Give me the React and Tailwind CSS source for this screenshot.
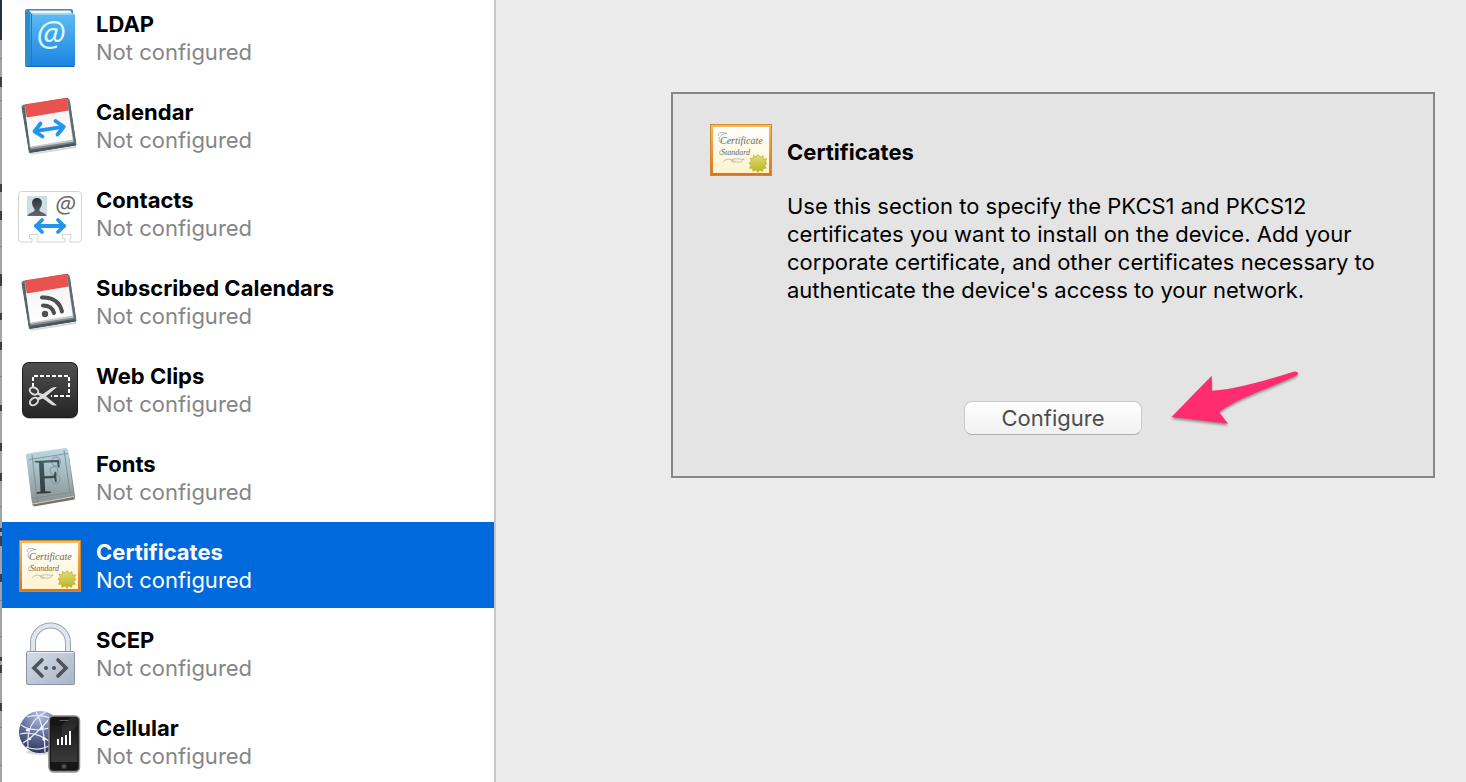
import React, { useState } from "react";

function LdapIcon() {
  return (
    <svg viewBox="0 0 64 64" className="w-16 h-16 shrink-0" aria-hidden="true">
      <defs>
        <linearGradient id="book" x1="0" y1="0" x2="0" y2="1">
          <stop offset="0" stopColor="#62bdf3" />
          <stop offset="1" stopColor="#1a83e0" />
        </linearGradient>
      </defs>
      <path d="M7 6Q7 4 9 4H53Q55 4 55 6V12H7Z" fill="#3d8cb4" />
      <path d="M11 5.500H52.500L54 9H14Z" fill="#f4f4f4" />
      <path d="M7 6L12 8.500H55Q57 8.500 57 10.500V60Q57 62 55 62H9Q7 62 7 60Z" fill="url(#book)" />
      <path d="M7 6L12 8.500V61.500H9Q7 61.500 7 60Z" fill="#2d8dcb" />
      <path d="M13.500 9V61.500" stroke="#2277bd" strokeWidth="1" />
      <path d="M15 9.500H56" stroke="#8ad2fa" strokeWidth="1" />
      <path d="M8 61.500H56" stroke="#1269b8" strokeWidth="1" />
      <text x="33" y="41" textAnchor="middle" fontFamily="Open Sans, sans-serif" fontSize="34" fontStyle="italic" fill="#d9fbff">@</text>
    </svg>
  );
}

function CalendarBase({ children }) {
  return (
    <svg viewBox="0 0 64 64" className="w-16 h-16 shrink-0" aria-hidden="true">
      <defs>
        <linearGradient id="page" x1="0" y1="0" x2="0" y2="1">
          <stop offset="0" stopColor="#f4f4f4" />
          <stop offset="1" stopColor="#ffffff" />
        </linearGradient>
      </defs>
      <path d="M12 61L58 54" stroke="#000" strokeOpacity="0.15" strokeWidth="2" />
      <path d="M4 14Q4 12.500 5.500 12.300L49 5.500Q50.500 5.300 51 7L58 52L11.500 59.500Z" fill="#7d8b92" stroke="#4f5d65" strokeWidth="1" />
      <path d="M11.500 58.500L57.500 51" stroke="#4a555c" strokeWidth="2.500" />
      <path d="M5.500 14L12 58" stroke="#56636b" strokeWidth="2" />
      <path d="M51 9L57 51" stroke="#5e6b73" strokeWidth="2" />
      <path d="M7 13L12 55L55.500 48.500L48.500 6Z" fill="#c6caca" />
      <path d="M8 24L50.500 17L54.500 46.500L12.500 53.500Z" fill="url(#page)" />
      <path d="M7 12.500Q7 11.500 8 11.200L47.500 5Q48.500 5 48.800 6L50.500 17.500L9 24.500Z" fill="#e9524e" />
      {children}
    </svg>
  );
}

function CalendarIcon() {
  return (
    <CalendarBase>
      <g fill="none" stroke="#1f95ee" strokeWidth="3.800" strokeLinecap="round" strokeLinejoin="round">
        <path d="M17 38.200L45 33.800" />
        <path d="M22.500 30.500L16.500 38.300L24.500 43.500" />
        <path d="M37.500 28L45.800 33.700L39.500 41.500" />
      </g>
    </CalendarBase>
  );
}

function SubscribedIcon() {
  return (
    <CalendarBase>
      <g fill="none" stroke="#4f4f4f" strokeWidth="4" strokeLinecap="round">
        <path d="M24 28.500Q40.500 28 44 42.500" />
        <path d="M25 36.500Q34 36.500 36 44" />
      </g>
      <circle cx="27" cy="45" r="3.200" fill="#4f4f4f" />
    </CalendarBase>
  );
}

function ContactsIcon() {
  return (
    <svg viewBox="0 0 64 64" className="w-16 h-16 shrink-0" aria-hidden="true">
      <defs>
        <linearGradient id="person" x1="0" y1="0" x2="0" y2="1">
          <stop offset="0" stopColor="#2e3336" />
          <stop offset="1" stopColor="#62696c" />
        </linearGradient>
      </defs>
      <path d="M3.500 10.500H60.500Q63.500 10.500 63.500 13.500V58Q63.500 61 60.500 61H52V57.500H53V53.500H44.500V57.500H47V61H19V57.500H20V53.500H11.500V57.500H14V61H3.500Q0.500 61 0.500 58V13.500Q0.500 10.500 3.500 10.500Z" fill="#fff" stroke="#d3d3d3" strokeWidth="1" />
      <rect x="9" y="15" width="20" height="20" fill="#cfdde4" />
      <path d="M19 17C22.500 17 24.300 19.500 23.800 22.500C23.700 25 22.500 26.500 21.500 28V30C23 31.500 28 32 28.500 35H9.500C10 32 15 31.500 16.500 30V28C15.500 26.500 14.300 25 14.200 22.500C13.700 19.500 15.500 17 19 17Z" fill="url(#person)" />
      <text x="47.500" y="32" textAnchor="middle" fontFamily="Open Sans, sans-serif" fontSize="24" fontStyle="italic" fill="#6b6b6b">@</text>
      <g fill="none" stroke="#1f95ee" strokeWidth="3.800" strokeLinecap="round" strokeLinejoin="round">
        <path d="M18 45H46" />
        <path d="M24 39L18 45L24 51" />
        <path d="M40 39L46 45L40 51" />
      </g>
    </svg>
  );
}

function WebClipsIcon() {
  return (
    <svg viewBox="0 0 64 64" className="w-16 h-16 shrink-0" aria-hidden="true">
      <defs>
        <linearGradient id="clip" x1="0" y1="0" x2="0" y2="1">
          <stop offset="0" stopColor="#505050" />
          <stop offset="1" stopColor="#252525" />
        </linearGradient>
      </defs>
      <rect x="4.500" y="6" width="55" height="56" rx="7" fill="#bdbdbd" />
      <rect x="4" y="5" width="56" height="56" rx="7" fill="#1f1f1f" />
      <rect x="5" y="6" width="54" height="54" rx="6" fill="url(#clip)" />
      <path d="M15 30V19H51V39H33" fill="none" stroke="#fff" strokeWidth="2" strokeDasharray="4 2" />
      <g fill="none" stroke="#dcdcdc" strokeWidth="2">
        <ellipse cx="16" cy="34" rx="4.500" ry="3.300" transform="rotate(30 16 34)" />
        <ellipse cx="16" cy="44.500" rx="4.500" ry="3.300" transform="rotate(-40 16 44.500)" />
      </g>
      <path d="M19.500 35.500L25 37L33.500 31Q36.500 29.800 38.800 30.200L28 39.300L38.800 48.200Q35.500 49.300 32.500 47L25 41.600L20 43.300L18.500 41.300L22.500 39L18.500 37.500Z" fill="#dcdcdc" />
    </svg>
  );
}

function FontsIcon() {
  return (
    <svg viewBox="0 0 64 64" className="w-16 h-16 shrink-0" aria-hidden="true">
      <defs>
        <linearGradient id="fontBook" x1="0" y1="0" x2="0" y2="1">
          <stop offset="0" stopColor="#bcd9e3" />
          <stop offset="0.5" stopColor="#a3b7bd" />
          <stop offset="1" stopColor="#8a908f" />
        </linearGradient>
        <linearGradient id="letter" x1="0" y1="0" x2="0" y2="1">
          <stop offset="0" stopColor="#4c6973" />
          <stop offset="1" stopColor="#2c3132" />
        </linearGradient>
      </defs>
      <path d="M14 59L56.500 51.500V54.500L16 61.500Z" fill="#7a706a" />
      <path d="M50 4L57 51L56.500 54L54 50Z" fill="#8a8580" />
      <path d="M14 57L56 50.500V52L15 59.500Z" fill="#d0cac4" />
      <path d="M8 10.500Q7.800 8.800 9.500 8.500L47 3Q49.500 2.800 50 5L56 51L15 58.500Q14 58.500 13.800 57.500Z" fill="url(#fontBook)" />
      <g fill="none" stroke="#77898f" strokeWidth="0.800">
        <path d="M11 14.500L50 8.500M14 53.500L55 47M14 10L19.500 57M46 5L52.500 51" />
        <circle cx="38" cy="16.500" r="4.500" />
        <circle cx="36" cy="25.500" r="4" />
        <circle cx="37.500" cy="34" r="4.500" />
      </g>
      <text x="16" y="48" transform="rotate(-3 30 30)" fontFamily="Liberation Serif, serif" fontSize="50" fill="url(#letter)">F</text>
    </svg>
  );
}

function CertificateIcon() {
  return (
    <svg viewBox="0 0 64 64" className="w-16 h-16 shrink-0" aria-hidden="true">
      <defs>
        <linearGradient id="frame" x1="0" y1="0" x2="0" y2="1">
          <stop offset="0" stopColor="#f6bd59" />
          <stop offset="1" stopColor="#d9751f" />
        </linearGradient>
        <linearGradient id="paper" x1="0" y1="0" x2="0" y2="1">
          <stop offset="0" stopColor="#ffffff" />
          <stop offset="1" stopColor="#fff3cf" />
        </linearGradient>
        <linearGradient id="seal" x1="0" y1="0" x2="0" y2="1">
          <stop offset="0" stopColor="#e3e07c" />
          <stop offset="1" stopColor="#bdb11c" />
        </linearGradient>
      </defs>
      <rect x="1.500" y="7.500" width="61" height="51" fill="url(#frame)" stroke="#d3862f" strokeWidth="1" />
      <rect x="4" y="10" width="56" height="46" fill="url(#paper)" />
      <g fontFamily="Liberation Serif, serif" fontStyle="italic" fill="#6a6a64">
        <text x="11" y="27" fontSize="10">Certificate</text>
        <text x="12" y="38" fontSize="8">Standard</text>
      </g>
      <path d="M12 26C7 23 12 16 18 16.500C14 15 8 15 9.500 19M12 38C9 37 11 32 16 32" fill="none" stroke="#888" strokeWidth="0.600" />
      <path d="M14 45C18 40 23 43 26 44.500C30 46 33 45 35 42C32 43 29 41 25 42C21 43 22 46 26 45" fill="none" stroke="#a9a597" strokeWidth="0.700" />
      <path d="M49 37.500L51 40.300L54 38.500L54.300 42L57.700 41.800L56.500 45L58 46.500L55.800 48.500L57.300 51.300L54 51.500L53.500 54.500L50.700 52.800L49 55.500L47 52.800L44 54.500L43.700 51.300L40.500 51.300L42 48.300L40 46L42.500 44.300L41 41.300L44.200 41.300L44.500 38.300L47.300 40Z" fill="url(#seal)" stroke="#b4a520" strokeWidth="0.600" />
    </svg>
  );
}

function ScepIcon() {
  return (
    <svg viewBox="0 0 64 64" className="w-16 h-16 shrink-0" aria-hidden="true">
      <defs>
        <linearGradient id="lock" x1="0" y1="0" x2="1" y2="1">
          <stop offset="0" stopColor="#d2dce6" />
          <stop offset="1" stopColor="#a9b6c8" />
        </linearGradient>
      </defs>
      <path d="M15 31V21.500A17.500 17 0 0 1 50 21.500V31" fill="none" stroke="#98a4b6" strokeWidth="6" />
      <path d="M15 31V21.500A17.500 17 0 0 1 50 21.500V31" fill="none" stroke="#e1e6ee" strokeWidth="4" />
      <rect x="8.500" y="30.500" width="48" height="33" rx="1.500" fill="url(#lock)" stroke="#8593a9" strokeWidth="1" />
      <path d="M9.500 31.500H55.500" stroke="#edf2f7" strokeWidth="1" />
      <g fill="none" stroke="#4e5358" strokeWidth="3.600" strokeLinecap="round">
        <path d="M24 39L16 47L24 55" />
        <path d="M40 39L48 47L40 55" />
      </g>
      <circle cx="28" cy="47" r="2" fill="#4e5358" />
      <circle cx="36" cy="47" r="2" fill="#4e5358" />
    </svg>
  );
}

function CellularIcon() {
  return (
    <svg viewBox="0 0 64 64" className="w-16 h-16 shrink-0" aria-hidden="true">
      <defs>
        <radialGradient id="globe" cx="0.5" cy="0.1" r="0.9">
          <stop offset="0" stopColor="#b4bee4" />
          <stop offset="0.5" stopColor="#66729f" />
          <stop offset="1" stopColor="#2f365a" />
        </radialGradient>
        <linearGradient id="screen" x1="0" y1="0" x2="0" y2="1">
          <stop offset="0" stopColor="#1a1a1a" />
          <stop offset="1" stopColor="#3a3a3a" />
        </linearGradient>
      </defs>
      <ellipse cx="23" cy="43" rx="15" ry="3" fill="#000" fillOpacity="0.14" />
      <circle cx="22" cy="23" r="21" fill="url(#globe)" />
      <g fill="none" stroke="#e6ecfb" strokeWidth="1.200">
        <path d="M9 8Q21 4 35 10M3 16Q18 26 42 15M2 25Q17 21 34 34M5 34Q18 26 32 9M28 3Q8 12 10 38M18 3Q27 18 27 43M8 38Q20 43 33 36" />
      </g>
      <g fill="#fff">
        <circle cx="9.500" cy="21" r="1.500" />
        <circle cx="24" cy="18.500" r="1.500" />
        <circle cx="26" cy="30" r="1.700" />
        <circle cx="12" cy="30" r="1.200" />
      </g>
      <rect x="30.500" y="7" width="31.500" height="57" rx="5" fill="#000" fillOpacity="0.25" />
      <rect x="31" y="7" width="30.500" height="55.500" rx="4.500" fill="#161616" stroke="#8d8d92" strokeWidth="1.500" />
      <path d="M42 11.500H50" stroke="#555d6b" strokeWidth="1" strokeLinecap="round" />
      <rect x="33" y="16" width="26.500" height="37" fill="url(#screen)" />
      <path d="M53 8H59.500V16L44 32V16Z" fill="#fff" fillOpacity="0.08" />
      <path d="M40 36V30M44 36V28M48 36V26M52 36V22" stroke="#fff" strokeWidth="2" />
      <circle cx="46" cy="57.500" r="3" fill="#303030" />
      <rect x="45" y="56.500" width="2" height="2" fill="none" stroke="#888" strokeWidth="0.500" />
    </svg>
  );
}

const payloads = [
  { name: "LDAP", icon: LdapIcon },
  { name: "Calendar", icon: CalendarIcon },
  { name: "Contacts", icon: ContactsIcon },
  { name: "Subscribed Calendars", icon: SubscribedIcon },
  { name: "Web Clips", icon: WebClipsIcon },
  { name: "Fonts", icon: FontsIcon },
  { name: "Certificates", icon: CertificateIcon },
  { name: "SCEP", icon: ScepIcon },
  { name: "Cellular", icon: CellularIcon },
];

// Bits of the window behind that show past the edge: space above, then height
const slivers = [
  { gap: 18, size: 1 },
  { gap: 18, size: 10 },
  { gap: 13, size: 1 },
  { gap: 17, size: 1 },
  { gap: 65, size: 8 },
  { gap: 19, size: 9 },
  { gap: 26, size: 1 },
  { gap: 27, size: 12 },
  { gap: 27, size: 7 },
  { gap: 22, size: 8 },
  { gap: 26, size: 1 },
  { gap: 28, size: 6 },
  { gap: 32, size: 8 },
  { gap: 22, size: 8 },
  { gap: 25, size: 1 },
  { gap: 21, size: 4 },
  { gap: 4, size: 10 },
  { gap: 28, size: 8 },
  { gap: 18, size: 1 },
  { gap: 35, size: 1 },
  { gap: 20, size: 4 },
  { gap: 4, size: 8 },
  { gap: 30, size: 8 },
  { gap: 16, size: 1 },
  { gap: 37, size: 1 },
];

export default function App() {
  const [selected, setSelected] = useState("Certificates");

  return (
    <div className="flex h-screen overflow-hidden bg-[#ececec] font-['Inter','Liberation_Sans',sans-serif] text-[22px] leading-7 text-black">
      {/* Edge of the window behind */}
      <div className="w-0.5 shrink-0 bg-[#a3a3a3]">
        <div className="h-10 bg-[#25303b]" />
        {slivers.map(({ gap, size }, i) => (
          <div
            key={i}
            className={size > 1 ? "bg-[#3c3e44]" : "bg-[#80808c]"}
            style={{ marginTop: gap, height: size }}
          />
        ))}
      </div>

      {/* Left: payload list, scrolled so the first row is cut off */}
      <nav className="w-[494px] shrink-0 border-r-2 border-[#c8c8c8] bg-white">
        <ul className="-mt-1.5 flex flex-col gap-0.5">
          {payloads.map(({ name, icon: Icon }) => {
            const active = name === selected;
            return (
              <li key={name}>
                <button
                  onClick={() => setSelected(name)}
                  className={`flex h-[86px] w-full items-center gap-3.5 pl-4 text-left ${active ? "bg-[#0069dc] text-white" : "bg-white"}`}
                >
                  <Icon />
                  <span className="flex flex-col pt-0.5">
                    <span className="font-bold">{name}</span>
                    <span className={active ? "text-white" : "text-[#868686]"}>Not configured</span>
                  </span>
                </button>
              </li>
            );
          })}
        </ul>
      </nav>

      {/* Right: details of the selected payload */}
      <main className="min-w-0 flex-1 pt-[92px] pr-[31px] pl-[175px]">
        <section className="border-2 border-[#868686] bg-[#e4e4e4] pt-[23px] pr-9 pb-[41px] pl-9">
          <div className="flex items-center gap-3.5">
            <CertificateIcon />
            <h1 className="pt-1.5 font-bold">Certificates</h1>
          </div>
          <p className="mt-[11px] ml-[78px]">
            Use this section to specify the PKCS1 and PKCS12 certificates you want to install on the device. Add your
            corporate certificate, and other certificates necessary to authenticate the device's access to your network.
          </p>
          <div className="mt-[97px] flex justify-center">
            <div className="relative">
              <button className="block h-[34px] w-[178px] rounded-lg border border-[#cbcbcb] border-b-[#b0b0b0] bg-linear-to-b from-white to-[#f1f1f1] text-[#4d4d4d]">
                Configure
              </button>
              {/* Arrow pointing at the button */}
              <svg viewBox="0 0 136 64" className="absolute bottom-[3px] left-full ml-[26px] h-16 w-[136px] drop-shadow-[0_2px_1px_rgba(0,0,0,0.35)]" aria-hidden="true">
                <path d="M3.500 49L43.700 7.700L44 22.700C70 21 98 12 125.500 3.700C129 2.500 132 5.500 128.500 7.500C100 21 67 31 51.300 44.300L60 55.700Z" fill="#ff2d6f" />
              </svg>
            </div>
          </div>
        </section>
      </main>
    </div>
  );
}
